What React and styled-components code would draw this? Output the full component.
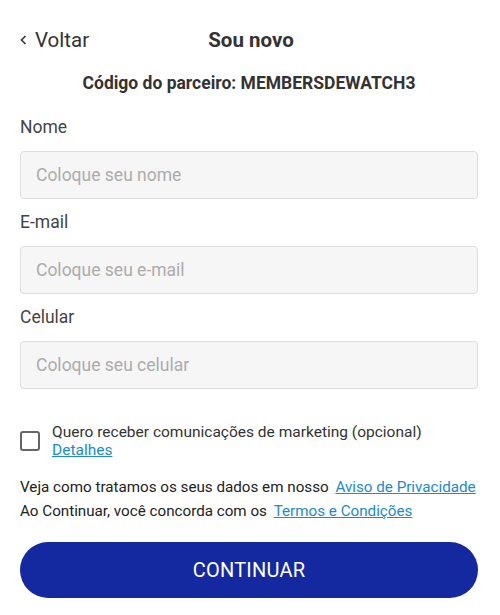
import * as React from "react"
import styled, { createGlobalStyle } from "styled-components"

const GlobalStyle = createGlobalStyle`
    html, body {
        margin: 0;
        padding: 0;
        background: #ffffff;
    }

    body {
        font-family: Roboto, "Liberation Sans", sans-serif;
        color: #363636;
    }
`

const Page = styled.div`
    width: 500px;
    height: 615px;
    box-sizing: border-box;
    padding: 26px 22px 0 20px;
    display: flex;
    flex-direction: column;
`

const Header = styled.div`
    display: grid;
    grid-template-columns: 1fr auto 1fr;
    align-items: center;
    height: 28px;
`

const Back = styled.a`
    display: flex;
    align-items: center;
    gap: 8px;
    font-size: 20.5px;
    color: #333;
    text-decoration: none;
`

const Title = styled.h1`
    margin: 0 0 0 4px;
    font-size: 20.5px;
    font-weight: 700;
    color: #333;
`

const Partner = styled.p`
    margin: 19px 0 0;
    text-align: center;
    font-size: 17.5px;
    line-height: 20px;
    font-weight: 700;
    color: #333;
`

const Fields = styled.div`
    display: flex;
    flex-direction: column;
    margin-top: 23px;
`

const Label = styled.label`
    font-size: 17.5px;
    color: #444;
    line-height: 22px;
`

const Input = styled.input`
    box-sizing: border-box;
    width: 100%;
    height: 48px;
    margin: 13px 0 12px;
    padding: 0 15px;
    border: 1px solid #dedede;
    border-radius: 4px;
    background: #f6f6f6;
    font-family: inherit;
    font-size: 17.5px;
    color: #333;
    outline: none;

    &::placeholder {
        color: #acacac;
    }
`

const Consent = styled.div`
    display: flex;
    gap: 12px;
    margin-top: 22px;
`

const Box = styled.span`
    flex: none;
    width: 16px;
    height: 16px;
    margin-top: 8px;
    border: 2px solid #666;
    border-radius: 3px;
`

const ConsentText = styled.div`
    font-size: 15.5px;
    line-height: 18px;
    color: #333;
`

const Link = styled.a`
    color: #2189cf;
    text-decoration: underline;
    margin-left: ${p => (p.$gap ? "3px" : "0")};
`

const Notes = styled.div`
    margin-top: 16px;
    font-size: 15.2px;
    line-height: 24px;
    color: #222;
`

const Button = styled.button`
    margin-top: 19px;
    height: 56px;
    width: 100%;
    border: none;
    border-radius: 28px;
    background: #1428a0;
    color: #fff;
    font-family: inherit;
    font-size: 20px;
    letter-spacing: 0.2px;
`

const fields = [
    { label: "Nome", placeholder: "Coloque seu nome" },
    { label: "E-mail", placeholder: "Coloque seu e-mail" },
    { label: "Celular", placeholder: "Coloque seu celular" },
]

const App = () => {
    return (
        <>
            <GlobalStyle />
            <Page>
                <Header>
                    <Back href="#">
                        <svg width="7" height="12" viewBox="0 0 7 12">
                            <path d="M5.5 2 L1.5 6 L5.5 10" fill="none" stroke="#333" strokeWidth="1.6" />
                        </svg>
                        Voltar
                    </Back>
                    <Title>Sou novo</Title>
                    <span />
                </Header>
                <Partner>Código do parceiro: MEMBERSDEWATCH3</Partner>
                <Fields>
                    {fields.map(f => (
                        <React.Fragment key={f.label}>
                            <Label>{f.label}</Label>
                            <Input placeholder={f.placeholder} />
                        </React.Fragment>
                    ))}
                </Fields>
                <Consent>
                    <Box />
                    <ConsentText>
                        Quero receber comunicações de marketing (opcional)
                        <br />
                        <Link href="#">Detalhes</Link>
                    </ConsentText>
                </Consent>
                <Notes>
                    Veja como tratamos os seus dados em nosso <Link $gap href="#">Aviso de Privacidade</Link>
                    <br />
                    Ao Continuar, você concorda com os <Link $gap href="#">Termos e Condições</Link>
                </Notes>
                <Button>CONTINUAR</Button>
            </Page>
        </>
    )
}

export default App
